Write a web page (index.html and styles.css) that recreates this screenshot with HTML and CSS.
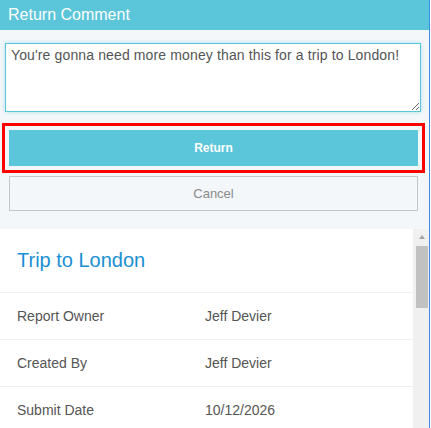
FILE: index.html
```html
<!DOCTYPE html>
<html lang="en">
<head>
  <meta charset="UTF-8" />
  <meta name="viewport" content="width=device-width, initial-scale=1.0"/>
  <title>Return Comment</title>
  <link rel="stylesheet" href="styles.css">
</head>
<body>

  <div class="dialog">
    <div class="dialog-header">Return Comment</div>

    <div class="dialog-body">
      <textarea class="comment">You're gonna need more money than this for a trip to London!</textarea>
      <button class="btn btn-return">Return</button>
      <button class="btn btn-cancel">Cancel</button>
    </div>

    <div class="report">
      <div class="report-content">
        <h1 class="report-title">Trip to London</h1>
        <div class="report-row">
          <span class="label">Report Owner</span>
          <span class="value">Jeff Devier</span>
        </div>
        <div class="report-row">
          <span class="label">Created By</span>
          <span class="value">Jeff Devier</span>
        </div>
        <div class="report-row">
          <span class="label">Submit Date</span>
          <span class="value">10/12/2026</span>
        </div>
      </div>
      <div class="scrollbar">
        <div class="scroll-arrow"></div>
        <div class="scroll-thumb"></div>
      </div>
    </div>
  </div>

</body>
</html>
```

FILE: styles.css
```css
/* RESET & BASE */
* {
  box-sizing: border-box;
  margin: 0;
  padding: 0;
}

body {
  font-family: "Liberation Sans", Arial, sans-serif;
  background: #fff;
  overflow: hidden;
}

/* DIALOG */
.dialog {
  width: 430px;
  height: 428px;
  border-right: 1px solid #3a8ee6;
  overflow: hidden;
}

.dialog-header {
  height: 30px;
  background: #5bc5d9;
  color: #fff;
  font-size: 16px;
  line-height: 30px;
  padding-left: 8px;
}

.dialog-body {
  background: #f3f7fa;
  padding: 13px 8px 18px 5px;
  display: flex;
  flex-direction: column;
}

.comment {
  width: 416px;
  height: 69px;
  border: 1px solid #5bc5d9;
  box-shadow: 0 0 4px rgba(91, 197, 217, 0.45);
  font-family: "Liberation Sans", Arial, sans-serif;
  font-size: 14px;
  line-height: 16px;
  letter-spacing: 0.13px;
  color: #555;
  padding: 3px 5px;
  outline: none;
  background: #fff;
}

.btn {
  width: 409px;
  margin-left: 4px;
  font-family: "Liberation Sans", Arial, sans-serif;
  cursor: pointer;
}

.btn-return {
  margin-top: 18px;
  height: 36px;
  border: none;
  background: #5bc5d9;
  color: #fff;
  font-size: 12px;
  font-weight: bold;
  outline: 3px solid #ff0000;
  outline-offset: 4px;
}

.btn-cancel {
  margin-top: 10px;
  height: 35px;
  border: 1px solid #c4c6c9;
  background: transparent;
  color: #8a8a8a;
  font-size: 13px;
}

/* REPORT */
.report {
  display: flex;
  height: 199px;
  background: #fff;
}

.report-content {
  flex: 1;
}

.report-title {
  font-size: 20px;
  font-weight: normal;
  line-height: 24px;
  color: #1a8fd3;
  padding: 19px 17px 20px;
  border-bottom: 1px solid #eef1f3;
}

.report-row {
  display: flex;
  align-items: center;
  height: 47px;
  padding-left: 17px;
  border-bottom: 1px solid #eef1f3;
  font-size: 14px;
  color: #555;
}

.report-row .label {
  width: 188px;
}

/* SCROLLBAR */
.scrollbar {
  width: 16px;
  background: #f0f0f0;
  padding-top: 6px;
}

.scroll-arrow {
  width: 0;
  height: 0;
  margin-left: 6px;
  border-left: 3.5px solid transparent;
  border-right: 3.5px solid transparent;
  border-bottom: 4px solid #a3a3a3;
}

.scroll-thumb {
  width: 12px;
  height: 62px;
  margin: 7px 0 0 3px;
  background: #c1c1c1;
}
```
